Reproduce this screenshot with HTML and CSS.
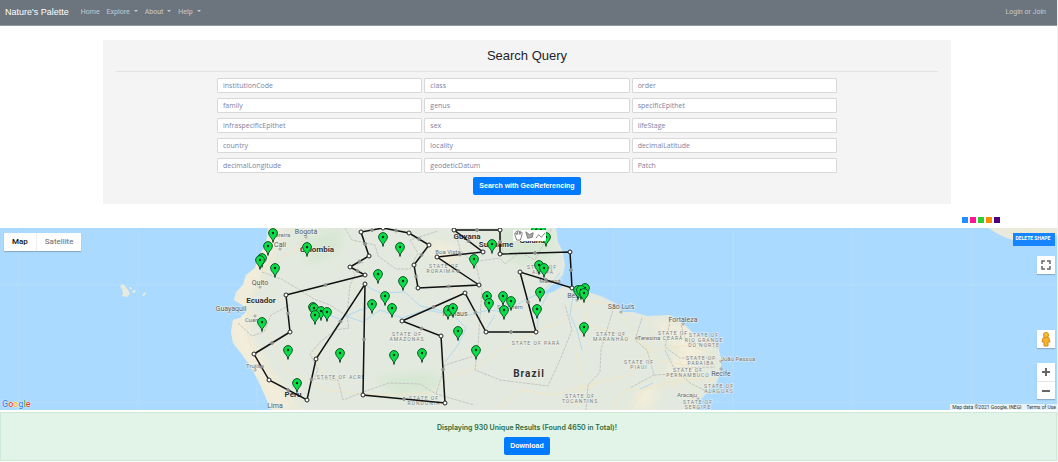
FILE: index.html
```html
<!DOCTYPE html>
<html lang="en">
<head>
<meta charset="utf-8">
<title>Nature's Palette</title>
<link rel="stylesheet" href="styles.css">
</head>
<body>
<nav class="navbar">
  <a class="brand" href="#">Nature's Palette</a>
  <a class="nav-link" href="#">Home</a>
  <a class="nav-link caret" href="#">Explore</a>
  <a class="nav-link caret" href="#">About</a>
  <a class="nav-link caret" href="#">Help</a>
  <a class="nav-link login" href="#">Login or Join</a>
</nav>
<main>
  <form class="query">
    <h1 class="title">Search Query</h1>
    <div class="fields">
      <input class="field" aria-label="institutionCode" placeholder="institutionCode">
      <input class="field" aria-label="class" placeholder="class">
      <input class="field" aria-label="order" placeholder="order">
      <input class="field" aria-label="family" placeholder="family">
      <input class="field" aria-label="genus" placeholder="genus">
      <input class="field" aria-label="specificEpithet" placeholder="specificEpithet">
      <input class="field" aria-label="infraspecificEpithet" placeholder="infraspecificEpithet">
      <input class="field" aria-label="sex" placeholder="sex">
      <input class="field" aria-label="lifeStage" placeholder="lifeStage">
      <input class="field" aria-label="country" placeholder="country">
      <input class="field" aria-label="locality" placeholder="locality">
      <input class="field" aria-label="decimalLatitude" placeholder="decimalLatitude">
      <input class="field" aria-label="decimalLongitude" placeholder="decimalLongitude">
      <input class="field" aria-label="geodeticDatum" placeholder="geodeticDatum">
      <input class="field" aria-label="Patch" placeholder="Patch">
    </div>
    <button class="btn" type="button">Search with GeoReferencing</button>
  </form>
  <div class="swatches">
    <button class="swatch blue" type="button" aria-label="Blue"></button>
    <button class="swatch pink" type="button" aria-label="Pink"></button>
    <button class="swatch green" type="button" aria-label="Green"></button>
    <button class="swatch orange" type="button" aria-label="Orange"></button>
    <button class="swatch indigo" type="button" aria-label="Indigo"></button>
  </div>
  <section class="map" aria-label="Map">
    <svg class="map-canvas" viewBox="0 228 1057 182" preserveAspectRatio="xMidYMid slice">
      <defs>
        <clipPath id="land"><path d="M268 228L266 245 259 255 255 268 246 275 243 285 236 292 234 300 244 306 246 312 240 318 233 320 231 332 233 343 240 352 249 364 258 380 266 398 271 410H696L698 402 707 393 717 382 721 372 721 358 718 345 710 338 693 333 683 323 670 315 647 316 633 312 623 312 615 303 603 297 583 290 570 289 562 281 565 265 563 252 558 242 556 228Z"/></clipPath>
        <filter id="soft"><feGaussianBlur stdDeviation="5"/></filter>
      </defs>
      <g class="graticule"><path d="M18 228V410M138 228V410M257 228V410M376 228V410M495 228V410M614 228V410M733 228V410M852 228V410M972 228V410M0 285H1058M0 402H1058"/></g>
      <path class="shore" d="M120 286l3-2 2 2 3 4 2 4-3 3-5-1 1-3-1-4zM132 291l3-1 1 2-3 1zM142 295l3-3 1 1-2 3zM129 287l2 0 1 2-2 0z"/>
      <g clip-path="url(#land)">
        <path class="ground" d="M220 228H730V410H220Z"/>
        <g filter="url(#soft)">
          <path class="sand" d="M262 228L240 280 225 330 250 370 270 410H300L268 370 250 335 248 300 266 265 285 228Z"/>
          <path class="sand" d="M650 320L690 328 705 350 695 375 665 375 680 350ZM430 240L462 250 450 265 432 258ZM640 390L660 385 650 410H632Z"/>
          <path class="forest" d="M500 228H550V260L520 265 500 250ZM300 240L340 228V250L310 265ZM375 378L430 372 445 385 400 398Z"/>
        </g>
        <path class="road" d="M290 228Q272 255 263 275T250 305 247 330 258 355 285 395 305 410M310 228Q302 250 280 258T262 280M247 313L262 320 275 345 288 370 325 390 380 395 430 393 455 375 475 368 500 350 528 335 560 322 584 300 620 306M584 300L588 325 575 350 582 380 575 410M590 326L625 335 650 350 690 345 715 355M620 312L640 340 665 375 690 400M683 324L675 350 688 380 700 398M648 318L655 340 630 375 600 382 575 395M455 315L458 280 450 260 470 245M610 410L625 390 660 388 710 375M670 317L663 340 700 365 718 361M642 340L660 360 690 366M318 345Q310 370 340 386M630 410L645 388 680 379 718 380M495 410L520 390 555 395 600 382"/>
        <path class="border" d="M262 272L281 279 295 287 314 299 330 305 347 316 349 328 335 330 320 342 310 354 318 370 314 379 338 380 343 400 363 392 389 383 420 384 436 394 474 405M238 323L252 336 264 332 271 315 290 305M347 316L350 285 355 275 350 266 365 262M345 228L352 240 375 245 378 256 396 269 410 269 418 253 410 240 438 231M455 228L460 250 472 262 500 258 505 264 520 252 535 260 552 228M500 228L503 255M475 261L482 290 478 345 475 370 500 380 548 386 560 360 572 330 565 305M436 394L445 365 474 356M615 303L607 330 601 350 600 372 588 385 586 410M642 318L635 340 647 350 654 375 630 388M671 316L665 347 680 358 716 358M665 350L674 368 715 367M674 368L690 383 708 392M681 325L686 341 718 348M654 375L674 374"/>
        <path class="river" d="M346 316L363 322 380 310 402 318 425 310 450 314 470 315 488 310 505 312 525 300 540 293 552 283 560 273M320 312L340 319 360 310 377 305M365 285L380 293 405 292 420 306 447 312M454 316L466 328 458 345 445 362M487 328L495 315M537 331L539 310 548 294M582 350L577 330 570 315 574 290M640 389L653 383"/>
        <path class="estuary" d="M541 295L551 286 564 274 566 284 553 292ZM567 300L577 287 582 291 573 296Z"/>
      </g>
      <path class="shore" d="M988 228Q1005 239 1017 241L1058 235V228Z"/>
      <path class="road" d="M1005 228L1017 234 1029 229 1058 233"/>
      <g id="labels" class="labels"></g>
      <polygon id="shape" class="shape"/>
      <g id="handles"></g>
      <g id="pins"></g>
    </svg>
    <div class="map-type">
      <button class="type active" type="button">Map</button><button class="type" type="button">Satellite</button>
    </div>
    <div class="draw-tools">
      <button class="tool" type="button" aria-label="Pan"><svg viewBox="0 0 12 12"><path d="M2 5Q1 3 3 4L4 5 3 2Q4 1 5 2L5 1Q6 0 7 2Q8 0 8 2L8 3Q10 1 10 4L9 8 8 11H4L3 8Z"/><path d="M5 2V5M7 2V5M8 3V5"/></svg></button>
      <button class="tool" type="button" aria-label="Draw a shape"><svg viewBox="0 0 12 12"><path class="fill" d="M2 2L6 5 10 3 9 8 4 9Z"/></svg></button>
      <button class="tool" type="button" aria-label="Draw a line"><svg viewBox="0 0 12 12"><path d="M1 9L4 5 7 8 11 3"/></svg></button>
    </div>
    <button class="delete" type="button">DELETE SHAPE</button>
    <button class="control fullscreen" type="button" aria-label="Toggle fullscreen"><svg viewBox="0 0 18 18"><path d="M5 8V5H8M10 5H13V8M13 10V13H10M8 13H5V10"/></svg></button>
    <button class="control pegman" type="button" aria-label="Street View"><svg viewBox="0 0 18 18"><path fill="#f5b22c" stroke="#d78b1a" d="M6 8Q6 7 9 7T12 8L13 12 11 12V16H7V12L5 12Z"/><circle cx="9" cy="5" r="2.5" fill="#fdbf2d" stroke="#d78b1a"/></svg></button>
    <div class="zoom">
      <button class="zoom-button" type="button" aria-label="Zoom in"><svg viewBox="0 0 18 18"><path d="M5 9H13M9 5V13"/></svg></button>
      <button class="zoom-button" type="button" aria-label="Zoom out"><svg viewBox="0 0 18 18"><path d="M5 9H13"/></svg></button>
    </div>
    <div class="google"><span class="g-blue">G</span><span class="g-red">o</span><span class="g-yellow">o</span><span class="g-blue">g</span><span class="g-green">l</span><span class="g-red">e</span></div>
    <div class="credits"><span>Map data ©2021 Google, INEGI</span><a href="#">Terms of Use</a></div>
  </section>
  <section class="results">
    <p class="summary">Displaying 930 Unique Results (Found 4650 in Total)!</p>
    <button class="btn" type="button">Download</button>
  </section>
</main>
<script src="map.js"></script>
</body>
</html>
```
FILE: styles.css
```css
* { box-sizing: border-box; }
body { margin: 0; font-family: "Liberation Sans", Arial, sans-serif; background: #fff; color: #212529; border-right: 1px solid #f1f1f1; }
button { font-family: inherit; border: 0; padding: 0; cursor: pointer; }
a { text-decoration: none; color: inherit; }

.navbar { display: flex; align-items: center; gap: 7px; height: 26px; padding: 0 11px 1px 5px; background: #6c757d; border-bottom: 1px solid #92999f; }
.brand { font-size: 9px; line-height: 12px; color: #fff; margin-right: 5px; }
.nav-link { font: 7px/12px Roboto, sans-serif; color: #c8cbce; }
.caret::after { content: ""; display: inline-block; margin-left: 4px; vertical-align: 2px; border: 2px solid transparent; border-top-color: #c8cbce; border-bottom: 0; }
.login { margin-left: auto; }

.query { margin: 14px 106px 0 103px; padding: 0 13px 9px; background: #f4f4f4; text-align: center; }
.title { margin: 0 0 6px; padding: 8px 0 7px; font-size: 13px; line-height: 16px; font-weight: 400; border-bottom: 1px solid #e3e3e3; }
.fields { display: grid; grid-template-columns: repeat(3, 1fr); gap: 5px 2px; margin: 0 101px 4px; }
.field { width: 100%; min-width: 0; height: 15px; padding: 0 5px; border: 1px solid #d8d8d8; border-radius: 1px; background: #fff; font: 500 7px/12px "Open Sans", sans-serif; }
.field::placeholder { color: #80819f; opacity: 1; }
.btn { display: block; height: 18px; margin: 0 auto; padding: 0 6px; border-radius: 2px; background: #007bff; color: #fff; font-size: 7px; line-height: 18px; font-weight: 700; }

.swatches { display: flex; justify-content: flex-end; gap: 2px; padding: 13px 57px 5px 0; }
.swatch { width: 6px; height: 6px; }
.blue { background: #1e90ff; }
.pink { background: #ff1493; }
.green { background: #32cd32; }
.orange { background: #ff8c00; }
.indigo { background: #4b0082; }

.map { position: relative; height: 182px; overflow: hidden; background: #aadaff; font-family: Roboto, sans-serif; }
.map-canvas { display: block; width: 100%; height: 100%; }
.graticule { fill: none; stroke: #b5dcf8; stroke-width: 1; }
.ground { fill: #e3e9de; }
.sand { fill: #f3edda; }
.forest { fill: #d6e7d3; }
.shore { fill: #e9eadb; }
.road { fill: none; stroke: #f0e6c4; stroke-width: 1; }
.border { fill: none; stroke: #c3c6c1; stroke-width: 1; stroke-dasharray: 3 1; }
.river { fill: none; stroke: #b1d9f3; stroke-width: 1; }
.estuary { fill: #aadaff; }
.shape { fill: none; stroke: #111; stroke-width: 1.5; }
.vertex { fill: #fff; stroke: #222; stroke-width: 1; }
.midpoint { fill: #ccc; fill-opacity: .6; stroke: #888; stroke-width: 1; }
.pin { fill: #08df47; stroke: #12522a; stroke-width: 1; }
.pin-dot { fill: #092b15; }
.labels { text-anchor: middle; fill: #6b7074; paint-order: stroke; stroke: #eef1ea; stroke-width: 1px; }
.city { font-size: 7px; fill: #55595c; }
.town { font-size: 6px; }
.country { font-size: 8px; font-weight: 700; fill: #303336; }
.nation { font-size: 10px; font-weight: 700; letter-spacing: 1px; fill: #303336; }
.state { font-size: 5px; letter-spacing: 1px; fill: #787d81; }

.map-type { position: absolute; left: 4px; top: 5px; display: flex; background: #fff; box-shadow: 0 1px 1px #0003; }
.type { height: 18px; padding: 0 8px; background: #fff; color: #666; font-size: 8px; line-height: 18px; }
.type.active { color: #111; font-weight: 500; border-right: 1px solid #eee; }
.draw-tools { position: absolute; left: 513px; top: 2px; display: flex; background: #fff; }
.tool { width: 11px; height: 11px; background: #fff; }
.tool svg { display: block; width: 100%; fill: none; stroke: #777; stroke-width: 1; }
.tool .fill { fill: #aaa; }
.delete { position: absolute; right: 2px; top: 5px; width: 42px; height: 13px; padding: 0 2px 2px 0; background: #1683ff; color: #fff; font-size: 5px; line-height: 11px; font-weight: 700; white-space: nowrap; }
.control { position: absolute; right: 2px; width: 18px; height: 18px; background: #fff; box-shadow: 0 1px 1px #0003; }
.control svg, .zoom-button svg { display: block; width: 18px; height: 18px; fill: none; stroke: #666; stroke-width: 1.5; }
.zoom-button svg { stroke-width: 2; }
.control.pegman svg { stroke-width: 1; }
.fullscreen { top: 28px; }
.pegman { top: 102px; }
.zoom { position: absolute; right: 2px; top: 135px; display: flex; flex-direction: column; background: #fff; box-shadow: 0 1px 1px #0003; }
.zoom-button { width: 18px; height: 18px; background: #fff; }
.zoom-button + .zoom-button { border-top: 1px solid #e6e6e6; }
.google { position: absolute; left: 2px; bottom: 0; font: 500 9px/12px Roboto, sans-serif; text-shadow: 0 0 1px #fff, 0 0 1px #fff; }
.g-blue { color: #4285f4; }
.g-red { color: #ea4335; }
.g-yellow { color: #fbbc05; }
.g-green { color: #34a853; }
.credits { position: absolute; right: 0; bottom: 0; display: flex; gap: 5px; padding: 0 1px 0 2px; background: #e7f3fb; color: #333; font-size: 5px; line-height: 6px; }

.results { margin-top: 2px; padding: 9px 3px 5px 0; background: #e2f3e7; border: 1px solid #cfe9d7; text-align: center; }
.summary { margin: 0 0 4px; color: #2b6b3b; font: 600 7px/11px Inter, sans-serif; }
```
FILE: map.js
```js
const SVG = "http://www.w3.org/2000/svg";

const vertices = [
  [286,295],[365,275],[350,267],[369,256],[361,232],[383,228],[409,233],[429,245],[414,265],[418,288],
  [479,285],[437,257],[483,252],[454,230],[500,230],[500,254],[570,252],[572,288],[520,272],[536,332],
  [486,332],[465,293],[402,321],[441,336],[445,403],[363,395],[365,284],[316,359],[307,400],[269,380],
  [254,354],[290,332]
];

const pins = [
  [273,233],[268,246],[262,258],[260,260],[275,268],[307,247],[313,307],[314,308],[321,311],[315,315],
  [327,312],[262,322],[288,350],[297,383],[340,353],[383,237],[378,274],[385,296],[372,304],[392,308],
  [394,355],[400,247],[403,281],[422,353],[458,331],[476,350],[448,310],[453,308],[474,259],[492,244],
  [487,296],[489,303],[503,296],[511,301],[504,310],[537,309],[540,292],[539,265],[544,268],[536,230],
  [541,230],[546,237],[584,327],[578,290],[585,288],[581,290],[584,293]
];

const labels = [
  ["city","Bogotá",306,234],["town","Pereira",281,237],["city","Cali",280,247],["country","Colombia",317,252],
  ["city","Quito",260,285],["country","Ecuador",261,303],["city","Guayaquil",231,311],["town","Cuenca",255,322],
  ["town","Trujillo",255,368],["country","Peru",293,397],["city","Lima",275,408],["state","STATE OF ACRE",341,379],
  ["state","STATE OF",407,336],["state","AMAZONAS",407,341],["state","STATE OF",444,268],["state","RORAIMA",441,273],
  ["town","Boa Vista",448,254],["country","Guyana",467,239],["country","Suriname",496,247],["country","Guiana",532,243],
  ["city","Manaus",455,316],["town","Santarém",510,309],["state","STATE OF",542,269],["state","AMAPÁ",543,274],
  ["town","Macapá",550,283],["city","Belém",577,298],["state","STATE OF PARÁ",536,345],["nation","Brazil",529,377],
  ["state","STATE OF",424,400],["state","RONDÔNIA",424,405],["state","STATE OF",580,398],["state","TOCANTINS",580,403],
  ["city","São Luís",621,309],["city","Fortaleza",683,322],["state","STATE OF",611,336],["state","MARANHÃO",611,341],
  ["town","Teresina",649,340],["state","STATE OF",673,335],["state","CEARÁ",673,340],["state","STATE OF",704,337],
  ["state","RIO GRANDE",704,342],["state","DO NORTE",704,347],["state","STATE OF",639,364],["state","PIAUÍ",639,369],
  ["state","STATE OF",701,360],["state","PARAÍBA",701,365],["state","STATE OF",688,372],["state","PERNAMBUCO",688,377],
  ["town","João Pessoa",738,361],["city","Recife",721,376],["state","STATE OF",719,388],["state","ALAGOAS",719,393],
  ["town","Aracaju",687,397],["state","STATE OF",698,404],["state","SERGIPE",698,409]
];

const towns = [[306,237],[280,249],[260,287],[255,316],[255,370],[621,312],[683,324],[637,338],[721,361],[721,369],[698,399],[577,300]];

function add(parent, tag, attributes) {
  const node = document.createElementNS(SVG, tag);
  for (const name in attributes) node.setAttribute(name, attributes[name]);
  document.getElementById(parent).append(node);
  return node;
}

towns.forEach(([cx, cy]) => add("labels", "circle", { class: "midpoint", cx, cy, r: 1 }));

labels.forEach(([kind, text, x, y]) => {
  add("labels", "text", { class: kind, x, y }).textContent = text;
});

document.getElementById("shape").setAttribute("points", vertices.join(" "));
vertices.forEach(([x, y], i) => {
  const [nx, ny] = vertices[(i + 1) % vertices.length];
  add("handles", "circle", { class: "midpoint", cx: (x + nx) / 2, cy: (y + ny) / 2, r: 1.4 });
  add("handles", "circle", { class: "vertex", cx: x, cy: y, r: 2 });
});

pins.forEach(([x, y]) => {
  add("pins", "path", { class: "pin", d: `M${x} ${y + 9.5}C${x} ${y + 5} ${x - 4.4} ${y + 4} ${x - 4.4} ${y}A4.4 4.4 0 0 1 ${x + 4.4} ${y}C${x + 4.4} ${y + 4} ${x} ${y + 5} ${x} ${y + 9.5}Z` });
  add("pins", "circle", { class: "pin-dot", cx: x, cy: y, r: 1.2 });
});
```
